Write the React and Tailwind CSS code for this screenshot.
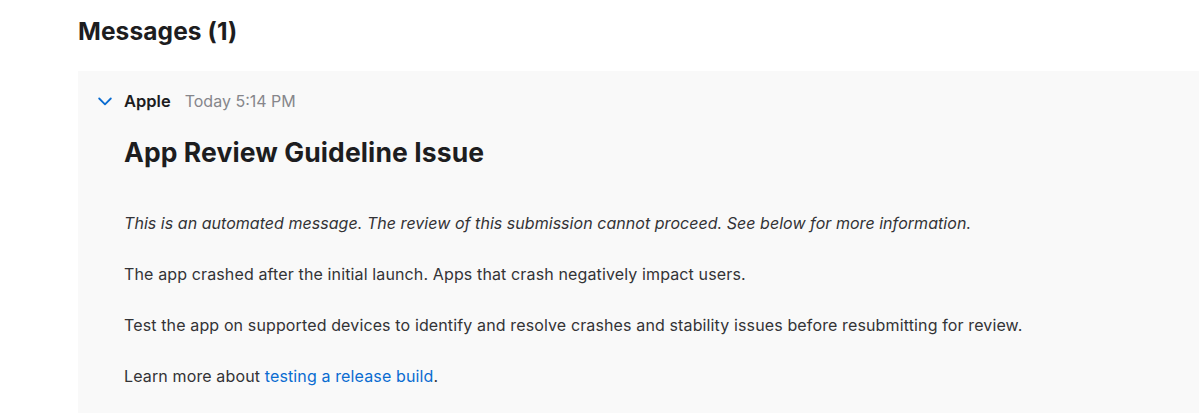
const paragraphs = [
  'The app crashed after the initial launch. Apps that crash negatively impact users.',
  'Test the app on supported devices to identify and resolve crashes and stability issues before resubmitting for review.',
]

const Chevron = () => (
  <svg width="14" height="9" viewBox="0 0 14 9" fill="none" className="text-[#0a6cd1]">
    <polyline points="1.2,1.5 7,7.3 12.8,1.5" stroke="currentColor" strokeWidth="1.8" strokeLinecap="round" strokeLinejoin="round" />
  </svg>
)

const App = () => {
  return (
    <div className="min-h-[413px] bg-white pl-[78px] pt-[14px] font-['Inter',sans-serif] text-[#1d1d1f]">
      <h1 className="text-[24.5px] font-bold leading-[34px] tracking-[0.1px]">Messages (1)</h1>

      <div className="mt-[23px] min-h-[342px] bg-[#f9f9f9] pl-[20px] pt-[20px]">
        <div className="flex items-center h-[20px]">
          <Chevron />
          <span className="ml-[12px] text-[16.5px] font-semibold">Apple</span>
          <span className="ml-[14px] text-[16px] text-[#86868b]">Today 5:14 PM</span>
        </div>

        <div className="pl-[26px]">
          <h2 className="mt-[25px] text-[26.5px] font-bold leading-[32px] tracking-[0.1px]">App Review Guideline Issue</h2>

          <div className="mt-[45px] flex flex-col gap-[30px] text-[16px] leading-[21px] text-[#333336]">
            <p className="italic tracking-[0.04px]">
              This is an automated message. The review of this submission cannot proceed. See below for more information.
            </p>
            {paragraphs.map((text) => (
              <p key={text} className="tracking-[0.13px]">{text}</p>
            ))}
            <p className="tracking-[0.13px]">
              Learn more about <a className="text-[#0a6cd1]">testing a release build</a>.
            </p>
          </div>
        </div>
      </div>
    </div>
  )
}

export default App
